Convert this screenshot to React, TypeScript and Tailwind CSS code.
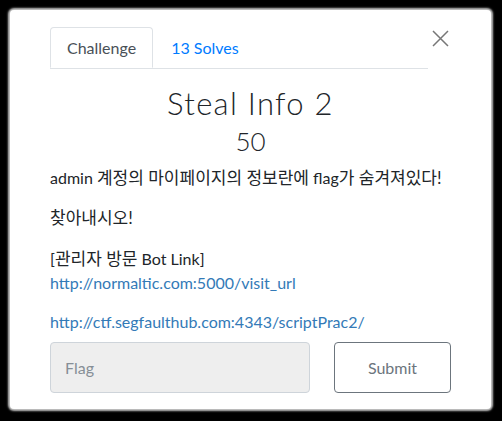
const lato = "font-['Lato','Noto_Sans_CJK_KR',sans-serif]"

// Korean glyphs render a touch larger than the latin text in the original
function K({ children }: { children: React.ReactNode }) {
  return <span className="text-[17px]">{children}</span>
}

export default function App() {
  return (
    <div className={`w-[502px] h-[421px] bg-black pt-[10px] pl-[10px] ${lato}`}>
      <div className="w-[481px] h-[399px] bg-white rounded-[4px] shadow-[0_0_2px_2px_#c4c4c4] pt-[17px] px-[40px]">
        {/* Tabs + close */}
        <div className="flex items-start">
          <div className="flex w-[378px] border-b border-[#dee2e6]">
            <div className="h-[41px] px-[16px] flex items-center border border-[#dee2e6] border-b-white rounded-t-[4px] -mb-px text-[16px] text-[#495057]">
              Challenge
            </div>
            <div className="h-[41px] px-[18px] flex items-center text-[16px] text-[#007bff]">
              13 Solves
            </div>
          </div>
          <svg className="ml-[4px] mt-[3px] text-[#777]" width="17" height="17" viewBox="0 0 17 17" fill="none" stroke="currentColor" strokeWidth="1.5">
            <path d="M1 1l15 15M16 1L1 16" />
          </svg>
        </div>

        {/* Title */}
        <h1 className="mt-[16px] text-center text-[31px] leading-[36px] tracking-[1.3px] font-light text-[#212529]">
          Steal Info 2
        </h1>
        <div className="mt-[4px] text-center text-[26px] leading-[32px] font-light text-[#212529]">50</div>

        {/* Description */}
        <div className="mt-[9px] text-[16px] leading-[24px] text-[#212529]">
          <p>
            admin <K>계정의 마이페이지의 정보란에</K> flag<K>가 숨겨져있다!</K>
          </p>
          <p className="mt-[16px]">
            <K>찾아내시오!</K>
          </p>
          <p className="mt-[17px]">
            [<K>관리자 방문</K> Bot Link]
          </p>
          <p>
            <a className="text-[#337ab7]">http://normaltic.com:5000/visit_url</a>
          </p>
          <p className="mt-[15px]">
            <a className="text-[#337ab7]">http://ctf.segfaulthub.com:4343/scriptPrac2/</a>
          </p>
        </div>

        {/* Flag form */}
        <div className="mt-[8px] flex items-center">
          <div className="w-[260px] h-[51px] rounded-[4px] bg-[#eeeeee] border border-[#ced4da] flex items-center px-[14px] text-[16px] text-[#868e96]">
            Flag
          </div>
          <button className="ml-[24px] w-[117px] h-[51px] rounded-[4px] border border-[#6c757d] text-[16px] text-[#6c757d]">
            Submit
          </button>
        </div>
      </div>
    </div>
  )
}
